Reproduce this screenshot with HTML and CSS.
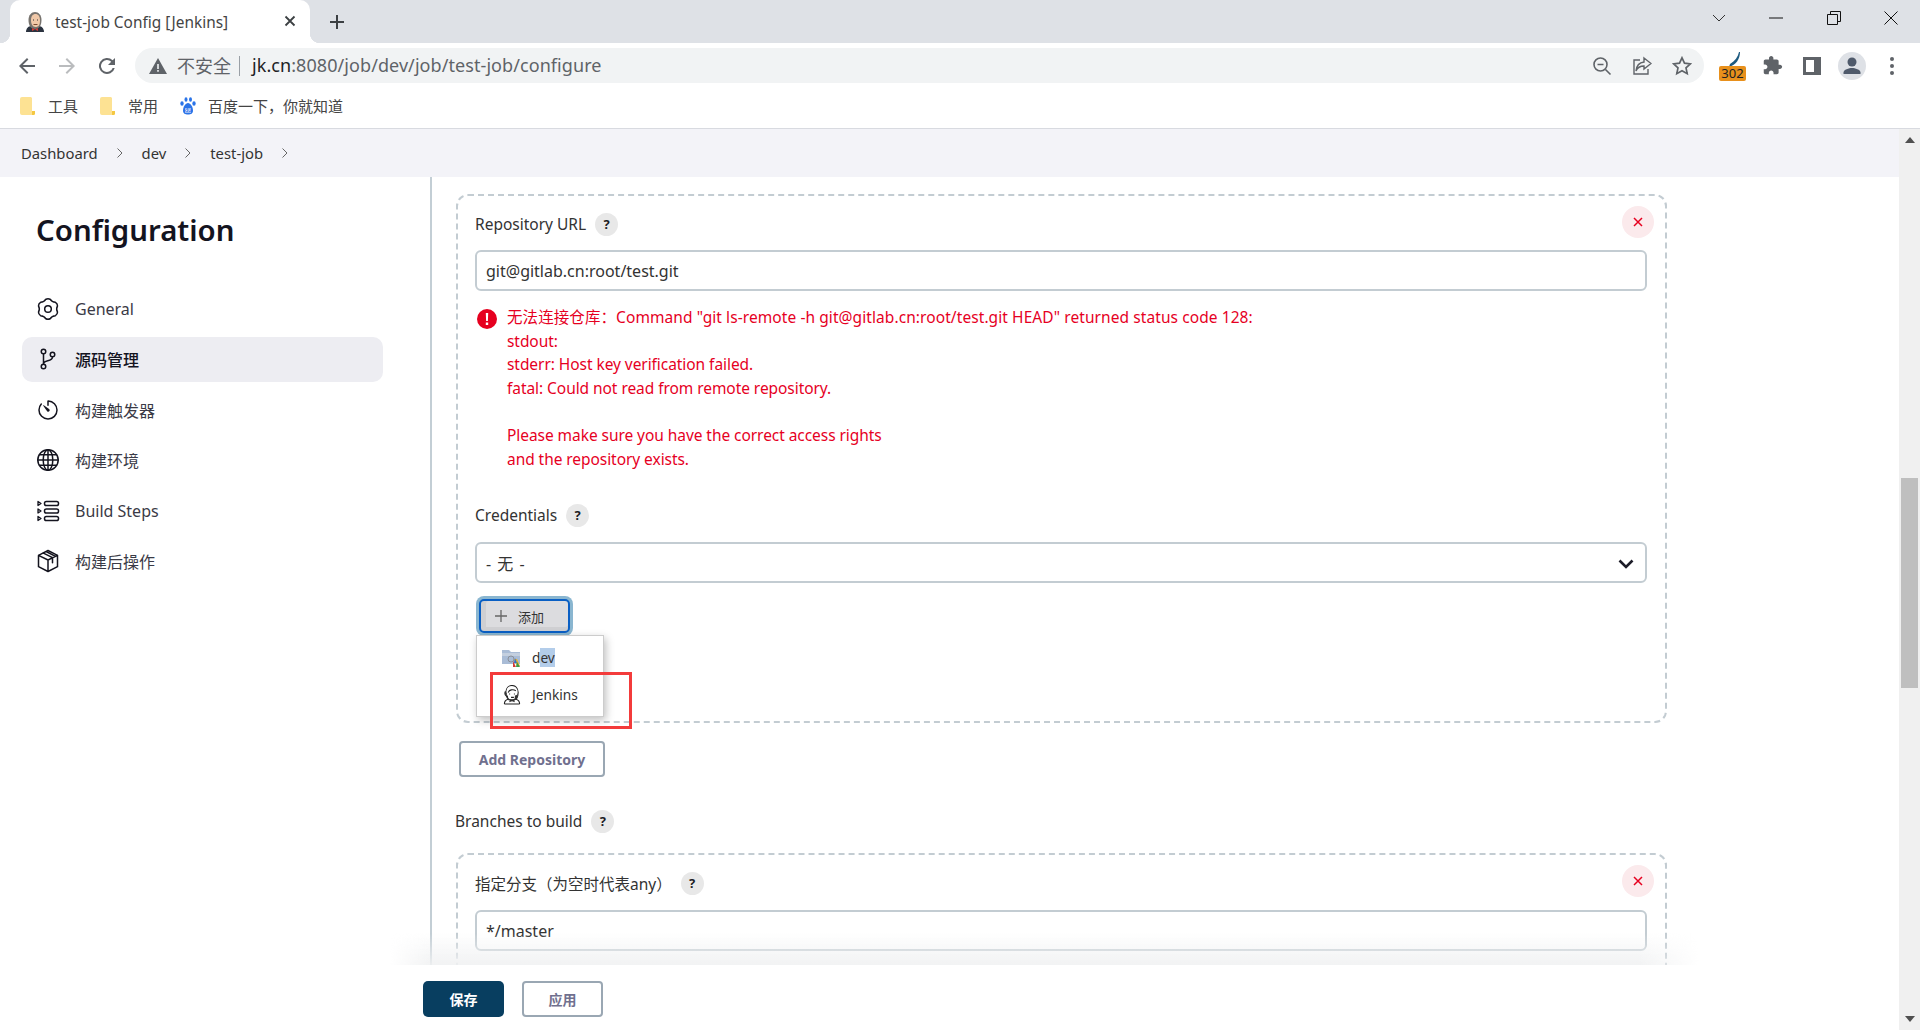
FILE: index.html
```html
<!DOCTYPE html>
<html lang="zh">
<head>
<meta charset="utf-8">
<title>test-job Config [Jenkins]</title>
<link rel="stylesheet" href="styles.css">
</head>
<body>
<div class="browser">
  <header class="tabstrip">
    <div class="tab">
      <svg class="favicon" viewBox="0 0 20 20"><path d="M1 20c0-4 3-6 5-6h8c2 0 5 2 5 6z" fill="#2b3340"/><path d="M3.500 8c0-5 3-8 6.500-8s6.500 3 6.500 8-2 9-6.500 9-6.500-4-6.500-9z" fill="#77736e"/><path d="M6 8c0-4 2-6 4.500-6S15 4 15 8.500s-1.500 6.500-4.500 6.500S6 12 6 8z" fill="#f0c8a8"/><path d="M7 16l3 1.500 3-1.500v3l-3-1.500-3 1.500z" fill="#d33833"/><path d="M8.500 12.500h4" stroke="#7a4a30" fill="none"/><path d="M8 8h1M12 8h1" stroke="#333" fill="none"/></svg>
      <span class="tab-title">test-job Config [Jenkins]</span>
      <svg class="tab-close" viewBox="0 0 12 12"><path d="M1.500 1.500l9 9M10.500 1.500l-9 9" stroke="#3c4043" stroke-width="1.800" fill="none"/></svg>
    </div>
    <svg class="new-tab" viewBox="0 0 16 16"><path d="M8 1v14M1 8h14" stroke="#3c4043" stroke-width="2" fill="none"/></svg>
    <div class="window-controls">
      <span class="win"><svg viewBox="0 0 14 8" width="14" height="8"><path d="M1 1l6 6 6-6" stroke="#333" fill="none"/></svg></span>
      <span class="win"><svg viewBox="0 0 14 2" width="14" height="2"><path d="M0 1h14" stroke="#111" fill="none"/></svg></span>
      <span class="win"><svg viewBox="0 0 14 14" width="14" height="14"><path d="M.5 3.500h10v10H.5zM3.500 3.500V.5h10v10h-3" stroke="#111" fill="none"/></svg></span>
      <span class="win"><svg viewBox="0 0 14 14" width="14" height="14"><path d="M.5.5l13 13M13.500.5l-13 13" stroke="#111" fill="none"/></svg></span>
    </div>
  </header>

  <nav class="toolbar">
    <span class="tool"><svg viewBox="0 0 24 24" width="24" height="24"><path d="M20 11H7.800l5.600-5.600L12 4l-8 8 8 8 1.400-1.400L7.800 13H20z" fill="#5f6368"/></svg></span>
    <span class="tool"><svg viewBox="0 0 24 24" width="24" height="24"><path d="M4 11h12.200l-5.600-5.600L12 4l8 8-8 8-1.400-1.400 5.600-5.600H4z" fill="#babcbe"/></svg></span>
    <span class="tool"><svg viewBox="0 0 24 24" width="24" height="24"><path d="M17.650 6.350A8 8 0 1 0 19.730 14h-2.080a6 6 0 1 1-1.410-6.240L13 11h7V4z" fill="#5f6368"/></svg></span>
    <div class="omnibox">
      <svg class="warn" viewBox="0 0 18 16"><path d="M9 0l9 16H0z" fill="#5f6368"/><path d="M8.200 6h1.600v5H8.200zM8.200 12h1.600v1.700H8.200z" fill="#f1f3f4"/></svg>
      <span class="insecure">不安全</span>
      <span class="omni-sep"></span>
      <span class="url"><b class="host">jk.cn</b>:8080/job/dev/job/test-job/configure</span>
      <span class="omni-actions">
        <span class="omni-btn"><svg viewBox="0 0 20 20" width="20" height="20"><circle cx="8.500" cy="8.500" r="6.500" stroke="#5f6368" stroke-width="1.600" fill="none"/><path d="M5.500 8.500h6M13.500 13.500l5 5" stroke="#5f6368" stroke-width="1.600" fill="none"/></svg></span>
        <span class="omni-btn"><svg viewBox="0 0 20 20" width="20" height="20"><path d="M8 4H2v14h14v-5" stroke="#5f6368" stroke-width="1.400" fill="none"/><path d="M12 2l7 5.500-7 5.500V10C8 10 5.500 11.500 4 15c.5-5 3.500-8.500 8-9z" stroke="#5f6368" stroke-width="1.400" fill="#f1f3f4"/></svg></span>
        <span class="omni-btn"><svg viewBox="0 0 20 20" width="20" height="20"><path d="M10 1.800l2.500 5.400 5.900.7-4.400 4 1.200 5.800-5.200-2.900-5.200 2.900 1.200-5.800-4.400-4 5.900-.7z" stroke="#5f6368" stroke-width="1.700" fill="none"/></svg></span>
      </span>
    </div>
    <div class="ext-tools">
      <span class="tool ext"><svg class="ext-pen" viewBox="0 0 16 16"><path d="M14 0c-1 5-4 9-9 12l-1 3c7-2 11-8 11-15z" fill="#1d5a80"/></svg><span class="ext-badge">302</span></span>
      <span class="tool"><svg viewBox="0 0 24 24" width="21" height="21"><path d="M20.500 11H19V7c0-1.100-.9-2-2-2h-4V3.500C13 2.120 11.880 1 10.500 1S8 2.120 8 3.500V5H4c-1.100 0-1.990.9-1.990 2v3.800H3.500c1.490 0 2.700 1.210 2.700 2.700s-1.210 2.700-2.700 2.700H2V20c0 1.100.9 2 2 2h3.800v-1.500c0-1.490 1.210-2.700 2.700-2.700 1.490 0 2.700 1.210 2.700 2.700V22H17c1.100 0 2-.9 2-2v-4h1.500c1.380 0 2.500-1.120 2.500-2.500S21.880 11 20.500 11z" fill="#5f6368"/></svg></span>
      <span class="tool"><svg viewBox="0 0 18 18" width="18" height="18"><path d="M0 0h18v18H0z" fill="#5f6368"/><path d="M3 3h8v12H3z" fill="#fff"/></svg></span>
      <span class="tool"><span class="avatar"><svg viewBox="0 0 24 24" width="24" height="24"><circle cx="12" cy="8" r="4.500" fill="#4f5a6b"/><path d="M3.500 20v-1.500c0-3 5.500-4.500 8.500-4.500s8.500 1.500 8.500 4.500V20z" fill="#4f5a6b"/></svg></span></span>
      <span class="tool"><svg viewBox="0 0 4 18" width="4" height="18"><circle cx="2" cy="2" r="2" fill="#5f6368"/><circle cx="2" cy="9" r="2" fill="#5f6368"/><circle cx="2" cy="16" r="2" fill="#5f6368"/></svg></span>
    </div>
  </nav>

  <div class="bookmarks">
    <span class="bm"><svg class="bm-folder" viewBox="0 0 15 18"><path d="M2 0h9l1 1v13h3v3l-1 1H2a2 2 0 0 1-2-2V2a2 2 0 0 1 2-2z" fill="#fde293"/><path d="M12 14h3v3l-1 1h-2z" fill="#f5c842"/></svg><span class="bm-label">工具</span></span>
    <span class="bm"><svg class="bm-folder" viewBox="0 0 15 18"><path d="M2 0h9l1 1v13h3v3l-1 1H2a2 2 0 0 1-2-2V2a2 2 0 0 1 2-2z" fill="#fde293"/><path d="M12 14h3v3l-1 1h-2z" fill="#f5c842"/></svg><span class="bm-label">常用</span></span>
    <span class="bm bm-baidu"><svg class="bm-paw" viewBox="0 0 16 18"><g fill="#2b74e8"><ellipse cx="6" cy="2.500" rx="1.500" ry="2.200"/><ellipse cx="10.500" cy="2.500" rx="1.500" ry="2.200"/><ellipse cx="2" cy="6.500" rx="1.700" ry="2.200"/><ellipse cx="14" cy="6.500" rx="1.700" ry="2.200"/><path d="M8 6c2.500 0 5 4 5 7.500 0 3-2 4-5 4s-5-1-5-4C3 10 5.500 6 8 6z"/></g><path d="M5 11.500h6v4H5z" fill="#fff"/><text x="8" y="15" text-anchor="middle" class="paw-text">du</text></svg><span class="bm-label">百度一下，你就知道</span></span>
  </div>

  <div class="viewport">
    <div class="site">
      <div class="crumbs">
        <span>Dashboard</span><svg class="crumb-sep" viewBox="0 0 8 12"><path d="M1.500 1.500L6 6l-4.500 4.500" stroke="#666" fill="none"/></svg>
        <span>dev</span><svg class="crumb-sep" viewBox="0 0 8 12"><path d="M1.500 1.500L6 6l-4.500 4.500" stroke="#666" fill="none"/></svg>
        <span>test-job</span><svg class="crumb-sep" viewBox="0 0 8 12"><path d="M1.500 1.500L6 6l-4.500 4.500" stroke="#666" fill="none"/></svg>
      </div>
      <div class="layout">
        <aside class="sidebar">
          <h1 class="side-title">Configuration</h1>
          <ul class="side-nav">
            <li class="side-item"><svg class="side-icon" viewBox="0 0 24 24"><path d="M9.900 2.200Q12 1.200 14.100 2.200Q15.900 5.250 19.430 5.310Q21.500 6.500 21.510 8.910Q19.800 12 21.510 15.090Q21.500 17.500 19.430 18.690Q15.900 18.750 14.100 21.800Q12 22.800 9.900 21.800Q8.100 18.750 4.570 18.690Q2.500 17.500 2.490 15.090Q4.200 12 2.490 8.910Q2.500 6.500 4.570 5.310Q8.100 5.250 9.900 2.200Z"/><circle cx="12" cy="12" r="3.300"/></svg>General</li>
            <li class="side-item is-active"><svg class="side-icon icon-git" viewBox="0 0 512 512"><circle cx="160" cy="96" r="48"/><circle cx="160" cy="416" r="48"/><circle cx="352" cy="160" r="48"/><path d="M160 144v224M352 208c0 128-192 48-192 160"/></svg>源码管理</li>
            <li class="side-item"><svg class="side-icon icon-lg" viewBox="0 0 512 512"><path d="M112.910 128A191.850 191.850 0 0 0 64 254c-1.180 106.350 85.650 193.800 192 194 106.200.2 192-85.830 192-192 0-104.540-83.550-189.610-187.500-192a4.360 4.360 0 0 0-4.500 4.370V152"/><path class="solid" d="M233.380 278.630l-79-113a8.130 8.130 0 0 1 11.320-11.320l113 79a32.500 32.500 0 0 1-37.250 53.260 33.210 33.210 0 0 1-8.070-7.940z"/></svg>构建触发器</li>
            <li class="side-item"><svg class="side-icon" viewBox="0 0 24 24"><circle cx="12" cy="12" r="10.200"/><ellipse cx="12" cy="12" rx="4.800" ry="10.200"/><path d="M12 1.800v20.400M1.800 12h20.400M3.500 6.800h17M3.500 17.200h17"/></svg>构建环境</li>
            <li class="side-item"><svg class="side-icon" viewBox="0 0 24 24"><rect x="8.500" y="2.500" width="14" height="4" rx="1.800"/><rect x="8.500" y="10" width="14" height="4" rx="1.800"/><rect x="8.500" y="17.500" width="14" height="4" rx="1.800"/><path d="M2 2.500l3 2-3 2zM2 10l3 2-3 2zM2 17.500l3 2-3 2z" stroke-width="1.300"/></svg>Build Steps</li>
            <li class="side-item"><svg class="side-icon" viewBox="0 0 24 24"><path d="M12 1.500l9.500 4.800v11.400L12 22.500l-9.500-4.800V6.300zM2.500 6.300L12 11l9.500-4.700M12 11v11.500M7 3.800l9.500 4.900v5M10 2.500l9.500 4.800"/></svg>构建后操作</li>
          </ul>
        </aside>

        <main class="content">
          <section class="repo-box">
            <button class="del-btn" type="button"><svg viewBox="0 0 12 12" width="12" height="12"><path d="M2 2l8 8M10 2l-8 8" stroke="#e6001f" stroke-width="1.500" fill="none"/></svg></button>
            <div class="label-row"><span>Repository URL</span><span class="help">?</span></div>
            <div class="field">git@gitlab.cn:root/test.git</div>
            <div class="error">
              <svg class="err-icon" viewBox="0 0 20 20"><circle cx="10" cy="10" r="10" fill="#e6001f"/><path d="M8.800 4h2.400l-.3 8H9.100zM8.800 13.500h2.400V16H8.800z" fill="#fff"/></svg>
              <div class="err-text">
                <div class="err-first">无法连接仓库：Command "git ls-remote -h git@gitlab.cn:root/test.git HEAD" returned status code 128:</div>
                <div>stdout:</div>
                <div>stderr: Host key verification failed.</div>
                <div>fatal: Could not read from remote repository.</div>
                <div>&nbsp;</div>
                <div>Please make sure you have the correct access rights</div>
                <div>and the repository exists.</div>
              </div>
            </div>
            <div class="label-row label-cred"><span>Credentials</span><span class="help">?</span></div>
            <div class="field field-select">- 无 -<svg class="sel-arrow" viewBox="0 0 16 10"><path d="M1.500 1.500L8 8l6.500-6.500" stroke="#1c1c28" stroke-width="2.600" fill="none"/></svg></div>
            <div class="add-wrap">
              <button class="add-btn" type="button"><svg viewBox="0 0 12 12" width="12" height="12"><path d="M6 0v12M0 6h12" stroke="#666" stroke-width="1.300" fill="none"/></svg><span>添加</span></button>
              <div class="menu">
                <div class="menu-item"><svg class="menu-icon" viewBox="0 0 20 20"><path d="M0 2h7l2 2h9v12H0z" fill="#a9bcd6"/><path d="M0 5h18v3H0z" fill="#c3cfdf"/><circle cx="9" cy="11" r="3" fill="none" stroke="#8a8f98"/><path d="M12 11l3 0 3 7h-3z" fill="#e8b030"/><path d="M11 13l3 6h-3z" fill="#d33833"/><path d="M15 14l3 5h-4z" fill="#3a9a4a"/><path d="M13 10l2 5h-3z" fill="#3370c4"/></svg><span class="menu-text">d<span class="selected">ev</span></span></div>
                <div class="menu-item"><svg class="menu-icon jenkins" viewBox="0 0 20 21"><path d="M2 20c0-3 2-4.500 4-5M18 20c0-3-2-4.500-4-5M2 20h16"/><path d="M3.500 8c0-5 3-7.500 6.500-7.500S16.500 3 16.500 8s-2 8-6.500 8-6.500-4-6.500-8z"/><path d="M6 8c1-3 5-4 8-2M7 9.500h1M12 9.500h1M9 13h3M5 11c0 3 1 4 2 5"/><path class="jen-fill" d="M13 11c2 0 3-1 3-3v4c0 3-2 4-4 4-1 0-1-1 0-1 1-.5 1-2 1-4z"/><path class="jen-fill" d="M3 6c-2 2-1 5 1 6l.5-3z"/><path class="jen-fill" d="M8 15l4 0 1 3-3-1-3 1z"/></svg><span>Jenkins</span></div>
              </div>
              <div class="annotation"></div>
            </div>
          </section>
          <button class="ghost-btn add-repo" type="button">Add Repository</button>
          <div class="label-row label-branches"><span>Branches to build</span><span class="help">?</span></div>
          <section class="repo-box branch-box">
            <button class="del-btn" type="button"><svg viewBox="0 0 12 12" width="12" height="12"><path d="M2 2l8 8M10 2l-8 8" stroke="#e6001f" stroke-width="1.500" fill="none"/></svg></button>
            <div class="label-row"><span>指定分支（为空时代表any）</span><span class="help">?</span></div>
            <div class="field field-branch">*/master</div>
          </section>
        </main>
      </div>
      <footer class="bottom-bar">
        <button class="save-btn" type="button">保存</button>
        <button class="ghost-btn apply-btn" type="button">应用</button>
      </footer>
    </div>
    <div class="scrollbar">
      <span class="sb-arrow sb-up"></span>
      <span class="sb-thumb"></span>
      <span class="sb-arrow sb-down"></span>
    </div>
  </div>
</div>
</body>
</html>
```
FILE: styles.css
```css
* { box-sizing: border-box; }
html, body { margin: 0; height: 100%; overflow: hidden; }
body {
  font-family: "Noto Sans", "Noto Sans CJK SC", sans-serif;
  color: #333;
  background: #fff;
  font-size: 15px;
}
.browser { display: flex; flex-direction: column; height: 1030px; }

/* tab strip */
.tabstrip { height: 43px; background: #dee1e6; display: flex; align-items: center; flex: none; }
.tab {
  position: relative; width: 300px; height: 43px; margin-left: 10px; padding-left: 15px;
  background: #fff; border-radius: 10px 10px 0 0; display: flex; align-items: center;
}
.tab::before, .tab::after {
  content: ""; position: absolute; bottom: 0; width: 10px; height: 10px;
}
.tab::before { left: -10px; background: radial-gradient(circle at 0 0, transparent 10px, #fff 10.500px); }
.tab::after { right: -10px; background: radial-gradient(circle at 100% 0, transparent 10px, #fff 10.500px); }
.favicon { width: 20px; height: 20px; flex: none; }
.tab-title { margin-left: 10px; padding-top: 2px; font-size: 15.400px; color: #444; white-space: nowrap; }
.tab-close { width: 12px; height: 12px; position: absolute; left: 274px; top: 15px; }
.new-tab { width: 16px; height: 16px; margin-left: 19px; flex: none; }
.window-controls { margin-left: auto; display: flex; height: 36px; margin-top: -7px; }
.win { width: 57.500px; display: flex; align-items: center; justify-content: center; }

/* toolbar */
.toolbar { height: 45px; display: flex; align-items: center; padding-left: 7px; padding-right: 8px; flex: none; background: #fff; }
.tool { width: 40px; height: 40px; display: flex; align-items: center; justify-content: center; flex: none; position: relative; }
.omnibox {
  flex: 1; height: 35px; margin: 0 8px; background: #f1f3f4; border-radius: 18px;
  display: flex; align-items: center; padding-left: 14px; padding-right: 2px;
}
.warn { width: 18px; height: 16px; flex: none; }
.insecure { margin-left: 10px; padding-bottom: 2px; font-size: 18px; color: #5f6368; }
.omni-sep { width: 1px; height: 20px; background: #9aa0a6; margin: 0 12px 0 8px; }
.url { font-size: 18px; padding-bottom: 2px; color: #5f6368; white-space: nowrap; letter-spacing: .07px; }
.host { font-weight: 400; color: #202124; }
.omni-actions { margin-left: auto; display: flex; }
.omni-btn { width: 40px; height: 35px; display: flex; align-items: center; justify-content: center; }
.ext-tools { display: flex; }
.ext-pen { position: absolute; left: 13px; top: 6px; width: 16px; height: 16px; }
.ext-badge {
  position: absolute; left: 7px; top: 20px; width: 27px; height: 15px; background: #e8901c;
  border-radius: 2px; font-size: 13px; line-height: 15px; text-align: center; color: #222;
}
.avatar { width: 28px; height: 28px; border-radius: 50%; background: #dee1e6; display: flex; align-items: center; justify-content: center; }

/* bookmarks */
.bookmarks { height: 41px; border-bottom: 1px solid #d8dae0; padding: 0 0 4px 20px; display: flex; align-items: center; gap: 22px; flex: none; background: #fff; }
.bm { display: flex; align-items: center; gap: 13px; font-size: 15px; color: #444; }
.bm-label { padding-bottom: 2px; }
.bm-baidu { gap: 12px; }
.bm-folder { width: 15px; height: 18px; flex: none; }
.bm-paw { width: 16px; height: 18px; flex: none; }
.paw-text { font-size: 5.500px; font-weight: 700; fill: #2b74e8; font-family: "Liberation Sans", sans-serif; }

/* page */
.viewport { flex: 1; display: flex; min-height: 0; }
.site { flex: 1; position: relative; min-width: 0; display: flex; flex-direction: column; overflow: hidden; }
.crumbs { height: 48px; background: #f3f3f8; display: flex; align-items: center; padding-left: 21px; flex: none; font-size: 14.800px; color: #333; }
.crumb-sep { width: 8px; height: 12px; margin: 0 18px; flex: none; }
.layout { flex: 1; display: flex; min-height: 0; }

/* sidebar */
.sidebar { width: 430px; flex: none; padding: 33px 47px 0 22px; }
.side-title { margin: 0 0 36px 14px; font-size: 29.400px; line-height: 40px; font-weight: 600; color: #14141f; }
.side-nav { list-style: none; margin: 0; padding: 0; display: flex; flex-direction: column; gap: 5.600px; }
.side-item { height: 45px; display: flex; align-items: center; padding-left: 15px; gap: 14px; font-size: 16px; color: #3a3a46; border-radius: 10px; }
.side-item.is-active { background: #ededf2; color: #14141f; font-weight: 500; }
.side-icon { width: 24px; height: 24px; flex: none; fill: none; stroke: #14141f; stroke-width: 1.500; stroke-linejoin: round; stroke-linecap: round; margin-left: -1px; margin-right: 1px; }
.icon-git, .icon-lg { stroke-width: 32px; }
.solid { fill: #14141f; stroke: none; }

/* content */
.content { flex: 1; border-left: 2px solid #c3ced5; padding: 17px 0 0 24px; min-width: 0; overflow: hidden; }
.repo-box {
  position: relative; width: 1211px; border: 2px dashed #c3ccd2; border-radius: 12px; padding: 16px 18px 85px 17px;
}
.branch-box { margin-top: 20px; padding-top: 16px; padding-bottom: 30px; }
.del-btn {
  position: absolute; right: 11px; top: 10px; width: 32px; height: 32px; border: 0; border-radius: 50%;
  background: #fbeaec; display: flex; align-items: center; justify-content: center; padding: 0;
}
.label-row { display: flex; align-items: center; height: 24px; font-size: 15.500px; color: #333; gap: 9px; }
.help { width: 23px; height: 23px; border-radius: 50%; background: #e8e8e8; color: #1c1c24; font-size: 13px; font-weight: 700; display: flex; align-items: center; justify-content: center; }
.field {
  position: relative; height: 41px; margin-top: 14px; border: 2px solid #c3ccd2; border-radius: 6px; padding-left: 9px;
  display: flex; align-items: center; font-size: 16px; color: #333;
}
.field-select { margin-top: 15px; word-spacing: 2px; }
.field-branch { margin-top: 15px; }
.sel-arrow { position: absolute; right: 11px; top: 15px; width: 16px; height: 10px; }
.error { display: flex; margin-top: 15px; color: #e6001f; font-size: 15.500px; line-height: 23.600px; }
.err-icon { width: 20px; height: 20px; flex: none; margin: 3px 0 0 2px; }
.err-text { margin-left: 10px; white-space: nowrap; letter-spacing: -.06px; }
.err-first { letter-spacing: .08px; }
.label-cred { margin-top: 32px; }

.add-wrap { position: relative; margin-top: 13px; padding-top: 3px; height: 40px; }
.add-btn {
  width: 91px; height: 34px; margin-left: 4px; padding: 0 0 0 14px; display: flex; align-items: center; gap: 11px;
  background: #dcdcdf; border: 2px solid #0a5fc4; border-radius: 5px; box-shadow: 0 0 0 3px #8ab6d0, inset 5px 0 0 #cfcfd2, inset 0 -4px 0 #cfcfd2;
  font-family: inherit; font-size: 13px; color: #333;
}
.menu {
  position: absolute; left: 1px; top: 39px; width: 128px; height: 82px; background: #fff; border: 1px solid #ccc;
  box-shadow: 2px 3px 8px rgba(0,0,0,.25); padding: 3px 0; display: flex; flex-direction: column; font-size: 13.700px; color: #333;
}
.menu-item { height: 37px; display: flex; align-items: center; padding-left: 25px; gap: 10px; }
.menu-icon { width: 20px; height: 20px; flex: none; }
.jenkins { fill: #fff; stroke: #222; stroke-width: 1.100; }
.jen-fill { fill: #333; stroke: none; }
.menu-text { display: inline-block; line-height: 20px; }
.selected { background: #b3cdea; }
.annotation { position: absolute; left: 15px; top: 76px; width: 142px; height: 57px; border: 3px solid #f33b3b; }

.ghost-btn {
  background: #fff; border: 2px solid #9aa7b3; border-radius: 4px; font-family: inherit; font-weight: 700; font-size: 14px; color: #70708e; padding: 0;
}
.add-repo { display: block; width: 146px; height: 36px; margin: 18px 0 0 3px; }
.label-branches { margin: 32px 0 0 -1px; }

/* bottom bar */
.bottom-bar {
  position: absolute; left: 0; right: 0; bottom: 0; height: 65px; background: #fff; display: flex; gap: 18px; padding: 16px 0 0 423px;
}
.bottom-bar::before {
  content: ""; position: absolute; left: 390px; right: 200px; top: -32px; height: 32px;
  background: linear-gradient(to bottom, rgba(240,241,242,0), rgba(240,241,242,.9));
  -webkit-mask-image: linear-gradient(to right, transparent, #000 40px, #000 calc(100% - 60px), transparent);
}
.save-btn { width: 81px; height: 36px; border: 0; border-radius: 5px; background: #083e60; color: #fff; font-family: inherit; font-weight: 700; font-size: 14px; padding: 0; }
.apply-btn { width: 81px; height: 36px; }

/* scrollbar */
.scrollbar { width: 21px; flex: none; background: #f0f0f0; display: flex; flex-direction: column; align-items: center; padding: 8px 0; }
.sb-arrow { width: 0; height: 0; border-left: 5px solid transparent; border-right: 5px solid transparent; }
.sb-up { border-bottom: 6px solid #505050; }
.sb-down { border-top: 6px solid #505050; margin-top: auto; }
.sb-thumb { width: 17px; height: 210px; background: #bfbfbf; margin-top: 335px; }
```
